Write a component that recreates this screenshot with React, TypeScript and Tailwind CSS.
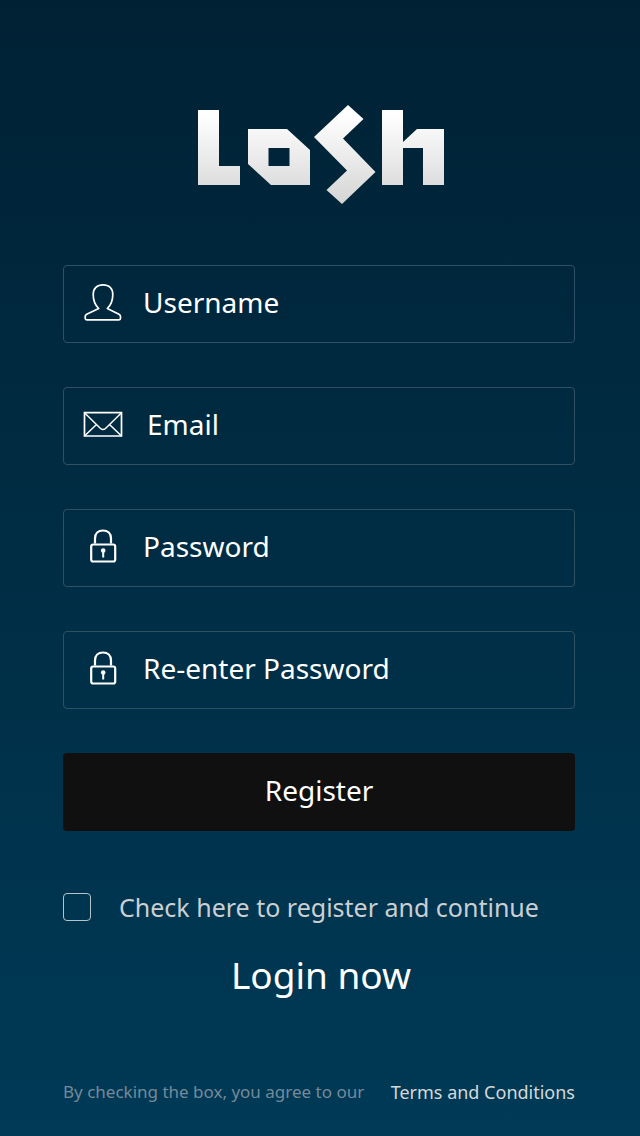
import React, { useState } from 'react';

const Logo: React.FC = () => (
  <svg viewBox="198 105 246 100" className="w-[246px] h-[100px]" role="img" aria-label="LoSh">
    <defs>
      <linearGradient id="logoFill" gradientUnits="userSpaceOnUse" x1="0" y1="105" x2="0" y2="205">
        <stop offset="0.1" stopColor="#ffffff" />
        <stop offset="1" stopColor="#d4d4d4" />
      </linearGradient>
    </defs>
    <g fill="url(#logoFill)" fillRule="evenodd">
      <path d="M198 110H219V166H240V185H198Z" />
      <path d="M248 129H287L310 150V185H271L248 164ZM268.500 148V166H289.500V148Z" />
      <path d="M348 105L363.500 119L343 138.500L375.500 172L342 204L326.500 190L347 170.500L314 137Z" />
      <path d="M382 110H403V142L417 129H444V185H423V148H403V185H382Z" />
    </g>
  </svg>
);

const UserIcon: React.FC = () => (
  <svg viewBox="0 0 40 40" className="w-10 h-10 shrink-0" fill="none" stroke="#fff" strokeWidth="1.7" strokeLinejoin="round" aria-hidden="true">
    <path d="M15.700 26.500C11.500 22.500 10.200 18.500 10.200 12.500C10.200 6.500 14 2.800 20 2.800S29.800 6.500 29.800 12.500C29.800 18.500 28.500 22.500 24.300 26.500L36 32.200Q37.500 33 37.500 34.500V36.300Q37.500 37.800 36 37.800H3.700Q2.200 37.800 2.200 36.300V34.500Q2.200 33 3.700 32.200Z" />
  </svg>
);

const MailIcon: React.FC = () => (
  <svg viewBox="0 0 40 40" className="w-10 h-10 shrink-0" fill="none" stroke="#fff" strokeWidth="1.7" aria-hidden="true">
    <path d="M1.500 8.700H38.500V32H1.500Z" />
    <path d="M1.500 8.700L17.500 24.500Q20 26.500 22.500 24.500L38.500 8.700M1.500 32L13.500 20.500M38.500 32L26.500 20.500" strokeWidth="1.5" />
  </svg>
);

const LockIcon: React.FC = () => (
  <svg viewBox="0 0 40 40" className="w-10 h-10 shrink-0" fill="none" stroke="#fff" strokeWidth="2.2" aria-hidden="true">
    <path d="M12 17.500V12.500C12 7.500 15.300 4.500 20 4.500S28 7.500 28 12.500V17.500" />
    <rect x="8.200" y="18.500" width="24" height="17" rx="2" />
    <circle cx="20.200" cy="24.500" r="2.300" fill="#fff" stroke="none" />
    <path d="M20.200 25V31.500" strokeWidth="2" />
  </svg>
);

const FIELDS = [
  { name: 'username', type: 'text', label: 'Username', Icon: UserIcon, gap: 'gap-5' },
  { name: 'email', type: 'email', label: 'Email', Icon: MailIcon, gap: 'gap-6' },
  { name: 'password', type: 'password', label: 'Password', Icon: LockIcon, gap: 'gap-5' },
  { name: 'confirmPassword', type: 'password', label: 'Re-enter Password', Icon: LockIcon, gap: 'gap-5' },
];

const App: React.FC = () => {
  const [formData, setFormData] = useState<Record<string, string>>({
    username: '',
    email: '',
    password: '',
    confirmPassword: '',
  });
  const [accepted, setAccepted] = useState(false);

  const handleChange = (e: React.ChangeEvent<HTMLInputElement>) => {
    const { name, value } = e.target;
    setFormData(prev => ({ ...prev, [name]: value }));
  };

  const handleSubmit = (e: React.FormEvent) => {
    e.preventDefault();
  };

  return (
    <main className="min-h-screen bg-linear-to-b from-[#002134] to-[#003a56] pl-[63px] pr-[65px] pt-[105px] pb-7 flex flex-col font-['Noto_Sans',sans-serif] text-white">
      <h1 className="pl-1 flex justify-center">
        <Logo />
      </h1>

      <form onSubmit={handleSubmit} className="mt-[60px] flex flex-col gap-11">
        {FIELDS.map(({ name, type, label, Icon, gap }) => (
          <label key={name} htmlFor={name} className={`flex items-center h-[78px] px-[19px] pb-1 border border-[#2f5062] rounded ${gap}`}>
            <Icon />
            <input
              type={type}
              id={name}
              name={name}
              value={formData[name]}
              onChange={handleChange}
              placeholder={label}
              aria-label={label}
              className="min-w-0 flex-1 bg-transparent text-[28px] leading-10 placeholder:text-white outline-none"
            />
          </label>
        ))}

        <button type="submit" className="h-[78px] pb-1 rounded bg-[#101010] text-[28px] leading-10">
          Register
        </button>

        <div className="mt-4 flex items-center gap-7">
          <input
            type="checkbox"
            id="accept"
            checked={accepted}
            onChange={e => setAccepted(e.target.checked)}
            className="appearance-none size-7 shrink-0 border border-[#b5c3cb] rounded checked:bg-white"
          />
          <label htmlFor="accept" className="text-[25px] leading-8 text-[#cccfd2]">Check here to register and continue</label>
        </div>
      </form>

      <a href="#login" className="mt-7 pl-1 self-center text-[37px] leading-12">Login now</a>

      <p className="mt-auto flex flex-wrap items-center justify-between leading-8">
        <span className="text-[17px] text-[#76899a]">By checking the box, you agree to our</span>
        <a href="#terms" className="text-[18px] text-[#d5d8da]">Terms and Conditions</a>
      </p>
    </main>
  );
};

export default App;
